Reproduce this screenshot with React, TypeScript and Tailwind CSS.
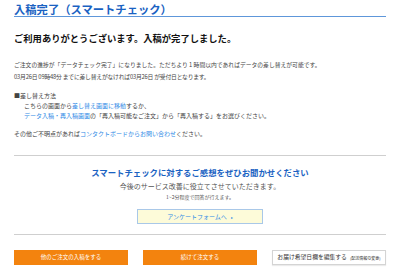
export default function App() {
  return (
    <div className="w-[400px] h-[272px] overflow-hidden bg-white px-[14px] font-['Noto_Sans_CJK_JP',sans-serif] text-[#444]">
      {/* page title */}
      <h1 className="pt-[3px] text-[11.3px] leading-[12px] font-bold text-[#1a62c2] border-b border-[#5e97da] pb-[1px]">
        入稿完了（スマートチェック）
      </h1>

      <h2 className="mt-[15px] text-[9.3px] leading-[12px] font-bold text-[#111]">
        ご利用ありがとうございます。入稿が完了しました。
      </h2>

      <div className="mt-[15px] text-[5.8px] leading-[12px]">
        <p>ご注文の進捗が「データチェック完了」になりました。ただちより 1 時間以内であればデータの差し替えが可能です。</p>
        <p className="tracking-[-0.2px]">03月26日 09時48分 までに差し替えがなければ03月26日 が受付日となります。</p>
      </div>

      <div className="mt-[7px] text-[6px] leading-[10px]">
        <p className="leading-[11px]">■差し替え方法</p>
        <p className="pl-[10px]">
          こちらの画面から<span className="text-[#2f8ae6]">差し替え画面に移動</span>するか、
        </p>
        <p className="pl-[10px]">
          <span className="text-[#2f8ae6]">データ入稿・再入稿画面</span>の「再入稿可能なご注文」から「再入稿する」をお選びください。
        </p>
      </div>

      <p className="mt-[8px] text-[6px] leading-[10px]">
        その他ご不明点があれば<span className="text-[#2f8ae6]">コンタクトボードからお問い合わせ</span>ください。
      </p>

      <hr className="mt-[16px] border-[#cfcfcf]" />

      {/* survey */}
      <div className="flex flex-col items-center">
        <p className="mt-[10px] text-[8.4px] leading-[12px] font-bold text-[#1a62c2]">
          スマートチェックに対するご感想をぜひお聞かせください
        </p>
        <p className="mt-[3px] text-[7px] leading-[10px] text-[#555]">今後のサービス改善に役立てさせていただきます。</p>
        <p className="mt-[2px] text-[5px] leading-[8px] text-[#555]">1~2分程度で回答が行えます。</p>
        <button className="mt-[8px] w-[126px] h-[15px] flex items-center justify-center gap-[4px] bg-[#fdfbd9] border border-[#a9c8e8] text-[6px] text-[#2f8ae6]">
          アンケートフォームへ<span className="text-[4px]">▸</span>
        </button>
      </div>

      <hr className="mt-[10px] border-[#cfcfcf]" />

      <div className="mt-[15px] grid grid-cols-3 gap-[15px]">
        <button className="h-[15px] bg-[#f3830e] text-white text-[5.5px] flex items-center justify-center">
          他のご注文の入稿をする
        </button>
        <button className="h-[15px] bg-[#f3830e] text-white text-[5.5px] flex items-center justify-center">
          続けて注文する
        </button>
        <button className="h-[15px] bg-white border border-[#d4d4d4] shadow-[0_1px_1px_rgba(0,0,0,0.08)] text-[#333] text-[5.8px] flex items-center justify-center gap-[3px]">
          お届け希望日欄を編集する<span className="text-[4px]">(配送情報の変更)</span>
        </button>
      </div>
    </div>
  );
}
